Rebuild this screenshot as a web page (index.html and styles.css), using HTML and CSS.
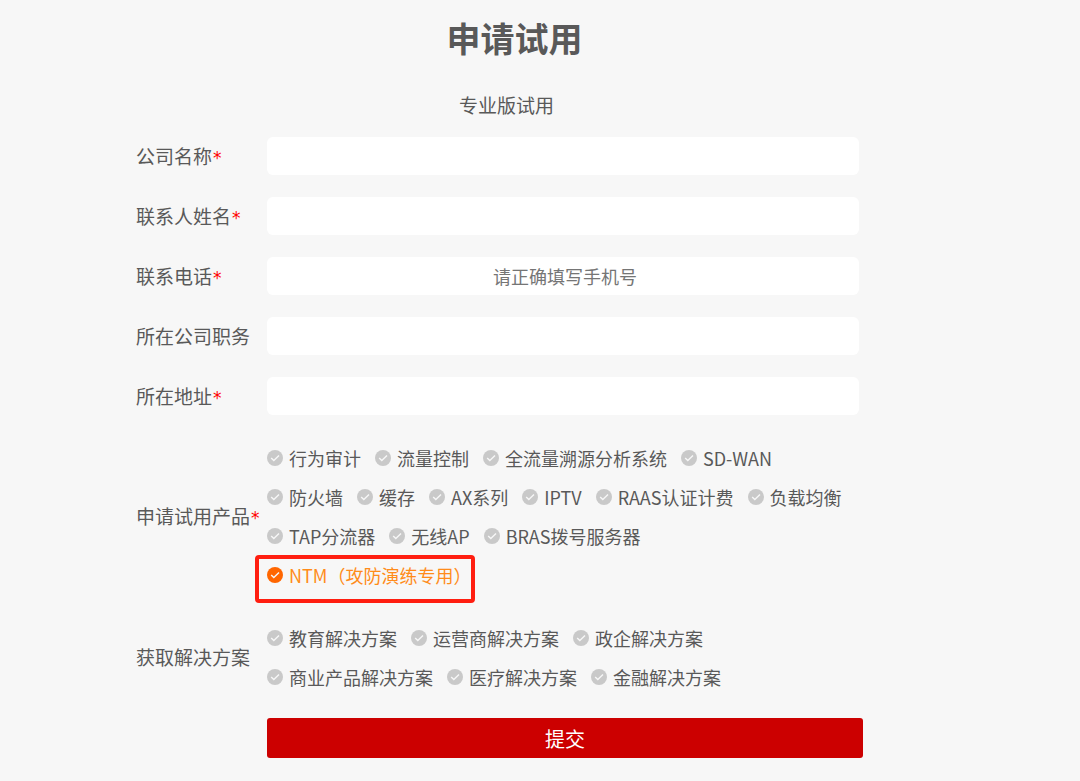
FILE: index.html
```html
<!DOCTYPE html>
<html lang="zh-CN">
<head>
<meta charset="utf-8">
<title>申请试用</title>
<link rel="stylesheet" href="styles.css">
</head>
<body>
<svg class="sprite" aria-hidden="true"><symbol id="tick" viewBox="0 0 16 16"><circle cx="8" cy="8" r="8" fill="currentColor"/><path d="M4.2 8 6.8 10.6l5.2-5.2" fill="none" stroke="#f7f7f7" stroke-width="1.4"/></symbol></svg>
<main class="page">
<h1 class="title">申请试用</h1>
<h2 class="subtitle">专业版试用</h2>
<form class="form">
<div class="row"><label class="label" for="company">公司名称<span class="star">*</span></label><input class="field" id="company" type="text"></div>
<div class="row"><label class="label" for="name">联系人姓名<span class="star">*</span></label><input class="field" id="name" type="text"></div>
<div class="row"><label class="label" for="phone">联系电话<span class="star">*</span></label><input class="field" id="phone" type="tel" placeholder="请正确填写手机号"></div>
<div class="row"><label class="label" for="job">所在公司职务</label><input class="field" id="job" type="text"></div>
<div class="row"><label class="label" for="address">所在地址<span class="star">*</span></label><input class="field" id="address" type="text"></div>
<div class="row products" role="group" aria-labelledby="products">
<span class="label" id="products">申请试用产品<span class="star">*</span></span>
<div class="options">
<div class="line">
<label class="option"><input type="checkbox"><svg class="icon"><use href="#tick"/></svg>行为审计</label>
<label class="option"><input type="checkbox"><svg class="icon"><use href="#tick"/></svg>流量控制</label>
<label class="option"><input type="checkbox"><svg class="icon"><use href="#tick"/></svg>全流量溯源分析系统</label>
<label class="option"><input type="checkbox"><svg class="icon"><use href="#tick"/></svg>SD-WAN</label>
</div>
<div class="line">
<label class="option"><input type="checkbox"><svg class="icon"><use href="#tick"/></svg>防火墙</label>
<label class="option"><input type="checkbox"><svg class="icon"><use href="#tick"/></svg>缓存</label>
<label class="option"><input type="checkbox"><svg class="icon"><use href="#tick"/></svg>AX系列</label>
<label class="option"><input type="checkbox"><svg class="icon"><use href="#tick"/></svg>IPTV</label>
<label class="option"><input type="checkbox"><svg class="icon"><use href="#tick"/></svg>RAAS认证计费</label>
<label class="option"><input type="checkbox"><svg class="icon"><use href="#tick"/></svg>负载均衡</label>
</div>
<div class="line">
<label class="option"><input type="checkbox"><svg class="icon"><use href="#tick"/></svg>TAP分流器</label>
<label class="option"><input type="checkbox"><svg class="icon"><use href="#tick"/></svg>无线AP</label>
<label class="option"><input type="checkbox"><svg class="icon"><use href="#tick"/></svg>BRAS拨号服务器</label>
</div>
<div class="line">
<label class="option marked"><input type="checkbox" checked><svg class="icon"><use href="#tick"/></svg>NTM（攻防演练专用）</label>
</div>
</div>
</div>
<div class="row" role="group" aria-labelledby="solutions">
<span class="label" id="solutions">获取解决方案</span>
<div class="options">
<div class="line">
<label class="option"><input type="checkbox"><svg class="icon"><use href="#tick"/></svg>教育解决方案</label>
<label class="option"><input type="checkbox"><svg class="icon"><use href="#tick"/></svg>运营商解决方案</label>
<label class="option"><input type="checkbox"><svg class="icon"><use href="#tick"/></svg>政企解决方案</label>
</div>
<div class="line">
<label class="option"><input type="checkbox"><svg class="icon"><use href="#tick"/></svg>商业产品解决方案</label>
<label class="option"><input type="checkbox"><svg class="icon"><use href="#tick"/></svg>医疗解决方案</label>
<label class="option"><input type="checkbox"><svg class="icon"><use href="#tick"/></svg>金融解决方案</label>
</div>
</div>
</div>
<button class="submit" type="submit">提交</button>
</form>
</main>
</body>
</html>
```
FILE: styles.css
```css
* { box-sizing: border-box; }
body {
  margin: 0;
  background: #f7f7f7;
  color: #595959;
  font-family: "Noto Sans CJK SC", sans-serif;
}
.sprite { position: absolute; width: 0; height: 0; }
.page { padding: 13px 217px 24px 136px; }
.title, .subtitle { text-align: center; }
.title {
  margin: 0 0 0 30px;
  font-size: 34px;
  line-height: 50px;
  font-weight: 700;
}
.subtitle {
  margin: 28px 0 18px 14px;
  font-size: 19px;
  line-height: 28px;
  font-weight: 400;
}
.form { display: flex; flex-direction: column; gap: 22px; }
.row { display: flex; align-items: center; }
.label {
  flex: 0 0 131px;
  font-size: 19px;
  line-height: 28px;
  white-space: nowrap;
}
.star {
  margin-left: 1px;
  color: #f00;
  font-family: "DejaVu Sans", sans-serif;
  font-size: 17px;
  line-height: 1;
}
.field {
  flex: 1;
  min-width: 0;
  height: 38px;
  margin-right: 4px;
  padding: 0 8px 0 12px;
  border: 0;
  border-radius: 6px;
  background: #fff;
  color: #595959;
  font: inherit;
  font-size: 18px;
  text-align: center;
}
.field::placeholder { color: #757575; opacity: 1; }
.products { padding: 1px 0 2px; }
.options { flex: 1; min-width: 0; }
.line {
  display: flex;
  gap: 14px;
  align-items: center;
  min-height: 39px;
}
.option {
  position: relative;
  display: flex;
  align-items: center;
  gap: 6px;
  font-size: 18px;
  line-height: 28px;
  white-space: nowrap;
}
.option input { position: absolute; opacity: 0; margin: 0; }
.icon { width: 16px; height: 16px; color: #c9c9c9; }
.option input:checked ~ .icon { color: #f60; }
.marked { color: #ff8c1a; }
.marked::after {
  content: "";
  position: absolute;
  inset: -6px -4px -14px -12px;
  border: 4px solid #ff1e10;
  border-radius: 4px;
}
.submit {
  height: 40px;
  margin-left: 131px;
  border: 0;
  border-radius: 3px;
  background: #c00;
  color: #fff;
  font: inherit;
  font-size: 20px;
}
```
